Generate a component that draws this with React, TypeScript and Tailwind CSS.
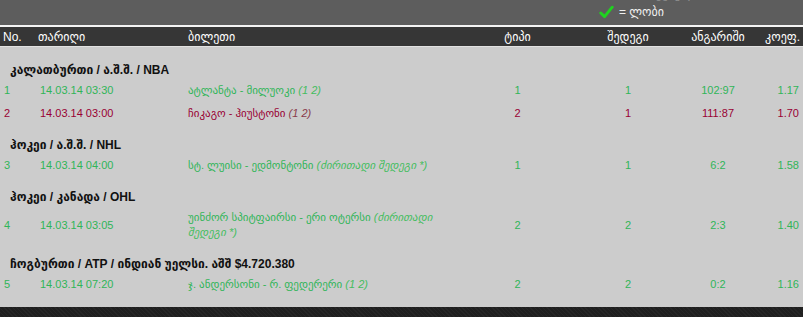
import React from "react";

const F = { fontFamily: '"Liberation Sans", Arial, "DejaVu Sans", sans-serif' };

type Row = {
  no: string;
  date: string;
  match: string;
  note?: string;
  type: string;
  res: string;
  score: string;
  coef: string;
  red?: boolean;
};

type Group = { title: string; rows: Row[] };

const groups: Group[] = [
  {
    title: "კალათბურთი / ა.შ.შ. / NBA",
    rows: [
      { no: "1", date: "14.03.14 03:30", match: "ატლანტა - მილუოკი", note: "(1 2)", type: "1", res: "1", score: "102:97", coef: "1.17" },
      { no: "2", date: "14.03.14 03:00", match: "ჩიკაგო - ჰიუსტონი", note: "(1 2)", type: "2", res: "1", score: "111:87", coef: "1.70", red: true },
    ],
  },
  {
    title: "ჰოკეი / ა.შ.შ. / NHL",
    rows: [
      { no: "3", date: "14.03.14 04:00", match: "სტ. ლუისი - ედმონტონი", note: "(ძირითადი შედეგი *)", type: "1", res: "1", score: "6:2", coef: "1.58" },
    ],
  },
  {
    title: "ჰოკეი / კანადა / OHL",
    rows: [
      { no: "4", date: "14.03.14 03:05", match: "უინძორ სპიტფაირსი - ერი ოტერსი", note: "(ძირითადი შედეგი *)", type: "2", res: "2", score: "2:3", coef: "1.40" },
    ],
  },
  {
    title: "ჩოგბურთი / ATP / ინდიან უელსი. აშშ $4.720.380",
    rows: [
      { no: "5", date: "14.03.14 07:20", match: "ჯ. ანდერსონი - რ. ფედერერი", note: "(1 2)", type: "2", res: "2", score: "0:2", coef: "1.16" },
    ],
  },
];

const cols = "grid grid-cols-[38px_150px_282px_95px_126px_54px_1fr]";

function DataRow({ r }: { r: Row }) {
  const c = r.red ? "text-[#990033]" : "text-[#30b558]";
  return (
    <div className={`${cols} items-center py-[4px] text-[11px] leading-[15px] ${c}`}>
      <div className="pl-[4px]">{r.no}</div>
      <div className="pl-[2px]">{r.date}</div>
      <div className="pr-[30px]">
        {r.match}{" "}
        {r.note && <span className={`italic ${r.red ? "text-[#8a3a4a]" : "text-[#44bd5e]"}`}>{r.note}</span>}
      </div>
      <div className="text-center">{r.type}</div>
      <div className="text-center">{r.res}</div>
      <div className="text-center">{r.score}</div>
      <div className="text-right pr-[4px]">{r.coef}</div>
    </div>
  );
}

export default function App() {
  return (
    <div className="w-[803px] h-[317px] overflow-hidden bg-[#cccccc] flex flex-col" style={F}>
      {/* top legend */}
      <div className="h-[25px] bg-[#5d5d5d] overflow-hidden flex flex-col items-start pl-[599px]">
        <div className="-mt-[13px] h-[15px] text-[12px] leading-[15px] text-[#8f8f8f] pl-[20px]">
          ✖ = წაგებული
        </div>
        <div className="flex items-center gap-[5px] h-[14px] mt-[3px]">
          <svg width="15" height="14" viewBox="0 0 15 14">
            <path d="M1.8 8 L5.6 11.6 L13.2 2.2" fill="none" stroke="#1fd21f" strokeWidth="2.9" strokeLinecap="round" strokeLinejoin="round" />
          </svg>
          <span className="text-[12px] leading-[12px] text-[#f0f0f0]">= ლობი</span>
        </div>
      </div>
      <div className="h-[2px] bg-[#f4f4f4]" />
      {/* header */}
      <div className={`${cols} h-[19px] bg-[#363636] items-center text-[12px] text-white`}>
        <div className="pl-[3px]">No.</div>
        <div>თარიღი</div>
        <div>ბილეთი</div>
        <div className="text-center">ტიპი</div>
        <div className="text-center">შედეგი</div>
        <div className="text-center">ანგარიში</div>
        <div className="text-right pr-[3px]">კოეფ.</div>
      </div>
      <div className="h-[1px] bg-[#e2e2e2]" />
      {/* body */}
      <div className="flex-1 pt-[3px]">
        {groups.map((g, i) => (
          <div key={i}>
            <div className="pt-[12px] pl-[10px] text-[12px] leading-[16px] font-bold text-[#111] h-[29px]">
              {g.title}
            </div>
            {g.rows.map((r) => (
              <DataRow key={r.no} r={r} />
            ))}
          </div>
        ))}
      </div>
      <div
        className="h-[10px] bg-[#222222]"
        style={{
          backgroundImage:
            "repeating-linear-gradient(45deg, #262626 0 1px, #1f1f1f 1px 3px)",
        }}
      />
    </div>
  );
}
